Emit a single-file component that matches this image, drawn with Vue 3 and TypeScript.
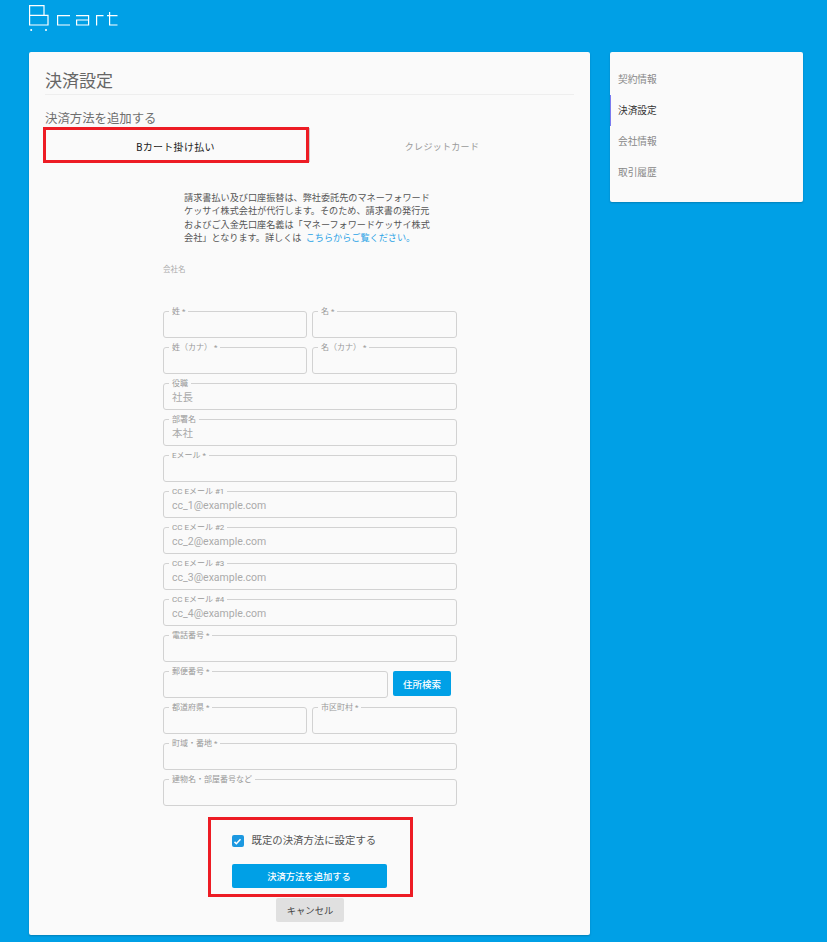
<script setup lang="ts">
interface Field { label: string; value?: string }
const rowsA: Field[][] = [
  [{ label: '姓 *' }, { label: '名 *' }],
  [{ label: '姓（カナ） *' }, { label: '名（カナ） *' }],
  [{ label: '役職', value: '社長' }],
  [{ label: '部署名', value: '本社' }],
  [{ label: 'Eメール *' }],
  [{ label: 'CC Eメール #1', value: 'cc_1@example.com' }],
  [{ label: 'CC Eメール #2', value: 'cc_2@example.com' }],
  [{ label: 'CC Eメール #3', value: 'cc_3@example.com' }],
  [{ label: 'CC Eメール #4', value: 'cc_4@example.com' }],
  [{ label: '電話番号 *' }],
]
const rowsB: Field[][] = [
  [{ label: '都道府県 *' }, { label: '市区町村 *' }],
  [{ label: '町域・番地 *' }],
  [{ label: '建物名・部屋番号など' }],
]
const nav = ['契約情報', '決済設定', '会社情報', '取引履歴']
</script>

<template>
  <div class="page">
    <header class="topbar">
      <svg class="logo" width="90" height="30" viewBox="0 0 90 30" fill="none" stroke="#fff" stroke-width="1.2">
        <path d="M0.6 1.6H15V11.4H0.6V1.6ZM0.6 11.4V21H19V11.4H15" />
        <circle cx="2.2" cy="26" r="1" fill="#fff" stroke="none" />
        <circle cx="17" cy="26" r="1" fill="#fff" stroke="none" />
        <path d="M41 11.6H28.6V21H41" />
        <path d="M47 11.6H59.6V21H47.6V16H59.6" />
        <path d="M67.6 21.4V11.6H74.5" />
        <path d="M80.6 8V21H88.5M78 11.6H88.5" />
      </svg>
    </header>
    <div class="columns">
      <main class="card">
        <h1 class="title">決済設定</h1>
        <h2 class="subtitle">決済方法を追加する</h2>
        <div class="tabs">
          <div class="tab active">Bカート掛け払い</div>
          <div class="tab">クレジットカード</div>
          <div class="redbox tabbox"></div>
        </div>
        <div class="formwrap">
          <p class="notice">
            請求書払い及び口座振替は、弊社委託先のマネーフォワードケッサイ株式会社が代行します。そのため、請求書の発行元およびご入金先口座名義は「マネーフォワードケッサイ株式会社」となります。詳しくは
            <a class="link">こちらからご覧ください。</a>
          </p>
          <div class="company">会社名</div>
          <form class="form" @submit.prevent>
            <div v-for="(row, i) in rowsA" :key="i" class="row">
              <fieldset v-for="f in row" :key="f.label" class="field">
                <legend>{{ f.label }}</legend>
                <span class="val">{{ f.value }}</span>
              </fieldset>
            </div>
            <div class="row ziprow">
              <fieldset class="field">
                <legend>郵便番号 *</legend>
                <span class="val"></span>
              </fieldset>
              <button class="search" type="button">住所検索</button>
            </div>
            <div v-for="(row, i) in rowsB" :key="'b' + i" class="row">
              <fieldset v-for="f in row" :key="f.label" class="field">
                <legend>{{ f.label }}</legend>
                <span class="val">{{ f.value }}</span>
              </fieldset>
            </div>
          </form>
          <div class="actions">
            <div class="redbox actionbox">
              <label class="check">
                <span class="box">
                  <svg width="9" height="9" viewBox="0 0 24 24" fill="none" stroke="#fff" stroke-width="4"><path d="M4 13l5 5L20 6" /></svg>
                </span>
                既定の決済方法に設定する
              </label>
              <button class="primary" type="button">決済方法を追加する</button>
            </div>
            <button class="cancel" type="button">キャンセル</button>
          </div>
        </div>
      </main>
      <aside class="side">
        <div v-for="(n, i) in nav" :key="n" class="navitem" :class="{ current: i === 1 }">{{ n }}</div>
      </aside>
    </div>
  </div>
</template>

<style>
html, body { margin: 0; background: #00a0e6; }
</style>

<style scoped>
.page {
  width: 827px;
  height: 942px;
  background: #00a0e6;
  overflow: hidden;
  font-family: Roboto, "Noto Sans CJK JP", sans-serif;
  box-sizing: border-box;
}
.topbar { height: 52px; padding: 4px 0 0 29px; box-sizing: border-box; }
.logo { display: block; }
.columns { display: flex; align-items: flex-start; gap: 20px; padding-left: 29px; }
.card {
  width: 561px;
  height: 883px;
  box-sizing: border-box;
  background: #fafafa;
  border-radius: 2px;
  padding: 18px 16px 0;
  box-shadow: 0 1px 2px rgba(0,0,0,.2);
}
.title {
  margin: 0;
  font-size: 17px;
  line-height: 22px;
  height: 24px;
  font-weight: 400;
  color: #666;
  border-bottom: 1px solid #eee;
}
.subtitle {
  margin: 16px 0 0;
  font-size: 12.4px;
  line-height: 16px;
  font-weight: 400;
  color: #6e6e6e;
}
.tabs { position: relative; display: flex; height: 36px; }
.tab {
  width: 264px;
  padding-top: 2px;
  box-sizing: border-box;
  display: flex;
  align-items: center;
  justify-content: center;
  font-size: 9px;
  color: #999;
  letter-spacing: .3px;
}
.tab.active { color: #222; font-size: 10px; padding-right: 3px; box-shadow: 2px 0 0 -1px #ccc; }
.tab:not(.active) { padding-left: 2px; }
.redbox { border: 3px solid #ed1c24; box-sizing: border-box; }
.tabbox { position: absolute; left: -2px; top: 0; width: 266px; height: 36px; }
.formwrap { display: flex; flex-direction: column; margin-top: 17px; padding-left: 118px; width: 294px; }
.notice {
  margin: 12px 0 0 21px;
  width: 250px;
  font-size: 9.15px;
  line-height: 13.3px;
  color: #555;
}
.link { color: #2aa3e6; margin-left: 2px; }
.company { margin-top: 20px; font-size: 7.5px; line-height: 10px; color: #aaa; height: 42px; }
.form { display: flex; flex-direction: column; gap: 5px; }
.row { display: flex; gap: 5px; }
.field {
  flex: 1 1 0;
  min-width: 0;
  margin: 0;
  padding: 0 8px;
  height: 31px;
  box-sizing: border-box;
  border: 1px solid #d2d2d2;
  border-radius: 3px;
  display: block;
}
.field:not(:last-child) { flex: 0 0 144px; }
.field legend {
  font-size: 8px;
  line-height: 9px;
  color: #999;
  padding: 0 3px;
  margin-left: -3px;
}
.val { display: block; font-size: 10.5px; line-height: 12px; margin-top: 4px; color: #aaa; }
.ziprow .field:not(:last-child) { flex: 0 0 225px; }
.search {
  align-self: flex-end;
  width: 58px;
  height: 25px;
  margin-bottom: 2px;
  border: 0;
  border-radius: 2px;
  background: #00a0e6;
  color: #fff;
  font: inherit;
  font-size: 9.5px;
  font-weight: 500;
  padding: 0;
}
.actions { display: flex; flex-direction: column; align-items: center; margin-top: 11px; }
.actionbox {
  width: 205px;
  height: 80px;
  padding: 14px 21px 0;
  display: flex;
  flex-direction: column;
  gap: 16px;
}
.check { display: flex; align-items: center; gap: 8px; font-size: 10.4px; line-height: 14px; color: #555; white-space: nowrap; }
.box {
  width: 12px;
  height: 12px;
  border-radius: 2px;
  background: #1c98e0;
  display: flex;
  align-items: center;
  justify-content: center;
  flex: none;
}
.primary {
  width: 155px;
  height: 24px;
  border: 0;
  border-radius: 2px;
  background: #00a0e6;
  color: #fff;
  font: inherit;
  font-size: 9.3px;
  font-weight: 500;
  padding: 0;
}
.cancel {
  margin-top: 1px;
  width: 68px;
  height: 24px;
  border: 0;
  border-radius: 2px;
  background: #e0e0e0;
  color: #444;
  font: inherit;
  font-size: 9.3px;
  padding: 0;
}
.side {
  width: 193px;
  height: 150px;
  box-sizing: border-box;
  background: #fafafa;
  border-radius: 2px;
  padding: 12px 0;
  box-shadow: 0 1px 2px rgba(0,0,0,.2);
}
.navitem {
  height: 31px;
  line-height: 31px;
  padding-left: 8px;
  font-size: 9.7px;
  color: #888;
}
.navitem.current { color: #333; box-shadow: inset 1px 0 0 #7b7bf0; }
</style>
